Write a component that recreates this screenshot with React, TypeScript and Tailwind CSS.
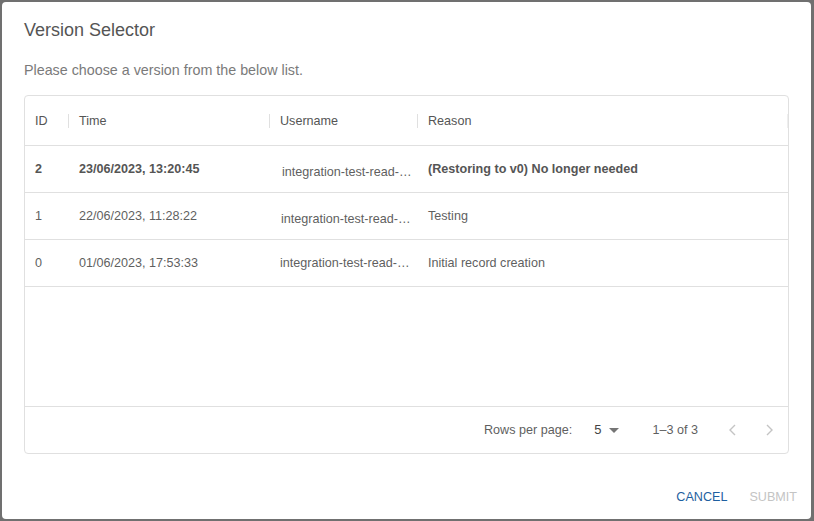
import React from "react";

type Version = {
  id: number;
  time: string;
  username: string;
  reason: string;
  current?: boolean;
  nudge?: string;
};

const versions: Version[] = [
  {
    id: 2,
    time: "23/06/2023, 13:20:45",
    username: "integration-test-read-write-user",
    reason: "(Restoring to v0) No longer needed",
    current: true,
    nudge: "pl-[12px] pt-[7px]",
  },
  {
    id: 1,
    time: "22/06/2023, 11:28:22",
    username: "integration-test-read-write-user",
    reason: "Testing",
    nudge: "pl-[11px] pt-[7px]",
  },
  {
    id: 0,
    time: "01/06/2023, 17:53:33",
    username: "integration-test-read-write-user",
    reason: "Initial record creation",
    nudge: "pl-[10px]",
  },
];

const cols = "grid grid-cols-[44px_201px_148px_1fr]";

const HeaderCell = ({ label, sep = true }: { label: string; sep?: boolean }) => (
  <div className="flex items-center h-full">
    {sep && <span className="w-px h-[14px] bg-[#e0e0e0] -ml-px" />}
    <span className="pl-[10px]">{label}</span>
  </div>
);

const App = () => {
  return (
    <div
      className="w-[814px] h-[521px] bg-[#707070] pt-[2px] pl-[2px] overflow-hidden"
      style={{ fontFamily: '"Liberation Sans", Arial, sans-serif' }}
    >
      <div className="w-[809px] h-[517px] bg-white rounded-[4px] flex flex-col">
        {/* Title */}
        <div className="pt-[16px] px-[22px] text-[18px] leading-[24px] text-[#555555]">
          Version Selector
        </div>
        <div className="mt-[18px] px-[22px] text-[14.3px] leading-[20px] text-[#7a7a7a]">
          Please choose a version from the below list.
        </div>

        {/* Table */}
        <div className="mt-[15px] mx-[22px] border border-[#e0e0e0] rounded-[4px] text-[12.6px] text-[#5f5f5f]">
          <div className="h-[310px]">
            <div className={`${cols} h-[50px] pt-[1px] border-b border-[#e0e0e0] text-[#555555]`}>
              <HeaderCell label="ID" sep={false} />
              <HeaderCell label="Time" />
              <HeaderCell label="Username" />
              <div className="flex items-center h-full justify-between">
                <div className="flex items-center">
                  <span className="w-px h-[14px] bg-[#e0e0e0] -ml-px" />
                  <span className="pl-[10px]">Reason</span>
                </div>
                <span className="w-px h-[14px] bg-[#eeeeee]" />
              </div>
            </div>
            {versions.map((v) => (
              <div
                key={v.id}
                className={`${cols} h-[47px] border-b border-[#e0e0e0] items-center ${
                  v.current ? "font-bold text-[#555555]" : ""
                }`}
              >
                <div className="pl-[10px]">{v.id}</div>
                <div className="pl-[10px]">{v.time}</div>
                <div className={`${v.nudge} pr-[4px] truncate font-normal text-[#5f5f5f]`}>
                  {v.username}
                </div>
                <div className="pl-[10px]">{v.reason}</div>
              </div>
            ))}
          </div>

          {/* Pagination */}
          <div className="h-[47px] border-t border-[#e0e0e0] flex items-center justify-end text-[#5f5f5f]">
            <span>Rows per page:</span>
            <div className="flex items-center ml-[22px] text-[#444444]">
              <span className="text-[13px]">5</span>
              <svg width="10" height="5" viewBox="0 0 10 5" className="ml-[8px] mt-[1px]">
                <path d="M0 0 L10 0 L5 5 Z" fill="#757575" />
              </svg>
            </div>
            <span className="ml-[33px]">1–3 of 3</span>
            <div className="flex items-center ml-[28px] mr-[12px] gap-[22px]">
              <svg width="14" height="14" viewBox="0 0 14 14">
                <path d="M9 2 L4 7 L9 12" stroke="#c4c4c4" strokeWidth="1.4" fill="none" />
              </svg>
              <svg width="14" height="14" viewBox="0 0 14 14">
                <path d="M5 2 L10 7 L5 12" stroke="#c4c4c4" strokeWidth="1.4" fill="none" />
              </svg>
            </div>
          </div>
        </div>

        {/* Actions */}
        <div className="flex justify-end items-center mt-[34px] pr-[14px] text-[12.6px] gap-[22px]">
          <button className="text-[#1e5fa0]">CANCEL</button>
          <button className="text-[#c4c4c4]" disabled>
            SUBMIT
          </button>
        </div>
      </div>
    </div>
  );
};

export default App;
